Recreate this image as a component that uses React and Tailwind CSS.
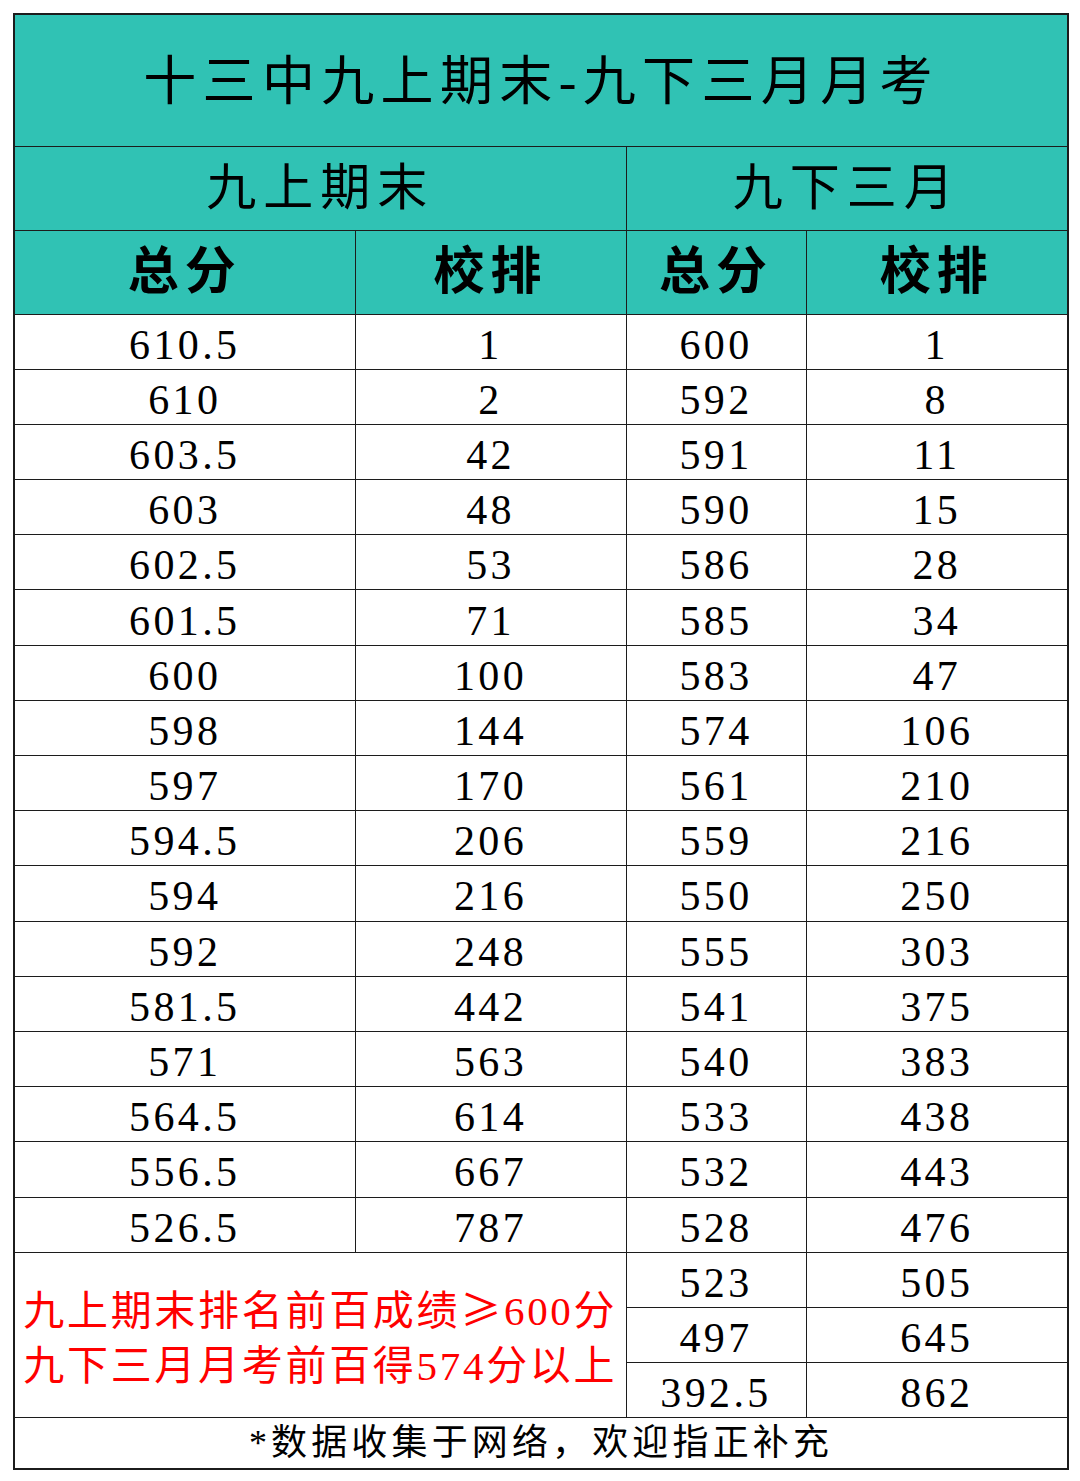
import React from 'react';

const left = [
  ['610.5', '1'], ['610', '2'], ['603.5', '42'], ['603', '48'], ['602.5', '53'],
  ['601.5', '71'], ['600', '100'], ['598', '144'], ['597', '170'], ['594.5', '206'],
  ['594', '216'], ['592', '248'], ['581.5', '442'], ['571', '563'], ['564.5', '614'],
  ['556.5', '667'], ['526.5', '787'],
];

const right = [
  ['600', '1'], ['592', '8'], ['591', '11'], ['590', '15'], ['586', '28'],
  ['585', '34'], ['583', '47'], ['574', '106'], ['561', '210'], ['559', '216'],
  ['550', '250'], ['555', '303'], ['541', '375'], ['540', '383'], ['533', '438'],
  ['532', '443'], ['528', '476'], ['523', '505'], ['497', '645'], ['392.5', '862'],
];

const font = { fontFamily: "'Liberation Serif', 'Noto Sans CJK SC', serif" };
const cell = 'border-[1.5px] border-[#1c1c1c] text-center align-middle p-0';
const num = 'text-[42px] tracking-[0.08em] leading-none pt-[6px]';
const head = 'text-[51px] font-bold tracking-[0.12em] leading-none';

export default function App() {
  return (
    <div className="bg-white w-[1080px] h-[1481px] p-[13px]" style={font}>
      <table className="table-fixed border-collapse border-2 border-[#1c1c1c] w-[1054px] text-black">
        <colgroup>
          <col className="w-[341px]" />
          <col className="w-[271px]" />
          <col className="w-[180px]" />
          <col className="w-[262px]" />
        </colgroup>
        <tbody>
          <tr className="h-[132px] bg-[#30c2b4]">
            <td colSpan={4} className={`${cell} text-[53px] tracking-[0.12em] leading-none pt-[4px]`}>
              十三中九上期末-九下三月月考
            </td>
          </tr>
          <tr className="h-[84px] bg-[#30c2b4]">
            <td colSpan={2} className={`${cell} text-[50px] tracking-[0.14em] leading-none`}>九上期末</td>
            <td colSpan={2} className={`${cell} text-[50px] tracking-[0.14em] leading-none`}>九下三月</td>
          </tr>
          <tr className="h-[84px] bg-[#30c2b4]">
            <td className={`${cell} ${head}`}>总分</td>
            <td className={`${cell} ${head}`}>校排</td>
            <td className={`${cell} ${head}`}>总分</td>
            <td className={`${cell} ${head}`}>校排</td>
          </tr>
          {right.map((r, i) => (
            <tr key={i} className="h-[55.2px]">
              {i < 17 && (
                <>
                  <td className={`${cell} ${num}`}>{left[i][0]}</td>
                  <td className={`${cell} ${num}`}>{left[i][1]}</td>
                </>
              )}
              {i === 17 && (
                <td colSpan={2} rowSpan={3} className={`${cell} text-[41px] tracking-[2.7px] leading-[55px] text-[#f00] pt-[4px]`}>
                  <div>
                    九上期末排名前百成绩<span style={{ fontFamily: "'Noto Sans CJK SC', sans-serif" }}>≥</span>600分
                  </div>
                  <div>九下三月月考前百得574分以上</div>
                </td>
              )}
              <td className={`${cell} ${num}`}>{r[0]}</td>
              <td className={`${cell} ${num}`}>{r[1]}</td>
            </tr>
          ))}
          <tr className="h-[51px]">
            <td colSpan={4} className={`${cell} text-[36px] tracking-[0.115em] leading-none`}>
              *数据收集于网络，欢迎指正补充
            </td>
          </tr>
        </tbody>
      </table>
    </div>
  );
}
